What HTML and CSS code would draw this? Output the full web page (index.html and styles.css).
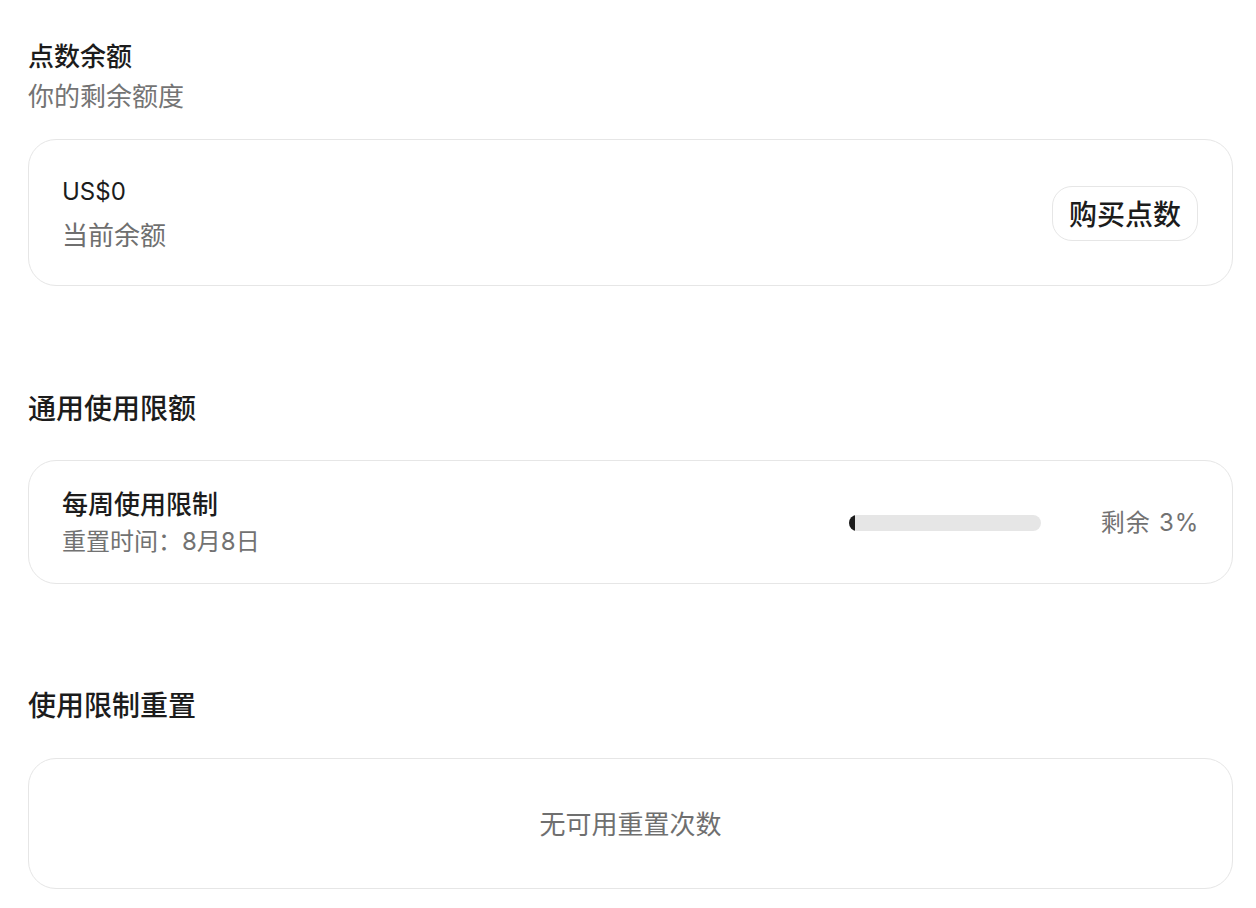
FILE: index.html
```html
<!DOCTYPE html>
<html lang="zh-CN">
<head>
<meta charset="utf-8">
<title>点数余额</title>
<link rel="stylesheet" href="styles.css">
</head>
<body>
<main class="page">
  <section class="section section-first">
    <h2 class="title-sm">点数余额</h2>
    <p class="subtitle">你的剩余额度</p>
    <div class="card card-balance">
      <div class="balance-info">
        <div class="amount">US$0</div>
        <div class="muted-label">当前余额</div>
      </div>
      <button class="btn">购买点数</button>
    </div>
  </section>

  <section class="section">
    <h2 class="title">通用使用限额</h2>
    <div class="card card-limit">
      <div class="limit-info">
        <div class="limit-name">每周使用限制</div>
        <div class="limit-reset">重置时间：8月8日</div>
      </div>
      <div class="limit-meter">
        <div class="bar"><div class="bar-fill" style="width:3%"></div></div>
        <div class="remain">剩余 3%</div>
      </div>
    </div>
  </section>

  <section class="section section-last">
    <h2 class="title">使用限制重置</h2>
    <div class="card card-empty">
      <div class="empty-text">无可用重置次数</div>
    </div>
  </section>
</main>
</body>
</html>
```

FILE: styles.css
```css
* { box-sizing: border-box; }

html, body {
  margin: 0;
  padding: 0;
  background: #ffffff;
}

body {
  font-family: "Inter", "Noto Sans CJK SC", sans-serif;
  color: #1c1c1c;
}

.page {
  padding: 38px 23px 20px 28px;
  display: flex;
  flex-direction: column;
}

.section {
  display: flex;
  flex-direction: column;
  margin-top: 103px;
}

.section-first { margin-top: 0; }
.section-last { margin-top: 102px; }

.title-sm {
  margin: 0;
  font-size: 26px;
  line-height: 38px;
  font-weight: 500;
  color: #1c1c1c;
}

.subtitle {
  margin: 1px 0 0;
  font-size: 26px;
  line-height: 40px;
  color: #747474;
}

.title {
  margin: 0;
  font-size: 28px;
  line-height: 40px;
  font-weight: 500;
  color: #1c1c1c;
}

.card {
  border: 1.5px solid #e6e6e6;
  border-radius: 28px;
  background: #fff;
}

.card-balance {
  margin-top: 22px;
  padding: 34px 33px 31px 33px;
  display: flex;
  align-items: center;
  justify-content: space-between;
}

.balance-info {
  display: flex;
  flex-direction: column;
  gap: 8px;
}

.amount {
  font-size: 24px;
  line-height: 36px;
  color: #1c1c1c;
}

.muted-label {
  font-size: 26px;
  line-height: 36px;
  color: #6f6f6f;
}

.btn {
  font-family: inherit;
  font-size: 28px;
  font-weight: 500;
  color: #1c1c1c;
  background: #fff;
  border: 1.5px solid #e6e6e6;
  border-radius: 20px;
  height: 55px;
  padding: 0 16px;
  margin: 0 1px 2px 0;
  cursor: pointer;
}

.card-limit {
  margin-top: 31px;
  padding: 26px 33px 24px;
  display: flex;
  align-items: center;
  justify-content: space-between;
}

.limit-info {
  display: flex;
  flex-direction: column;
  gap: 2px;
}

.limit-name {
  font-size: 26px;
  line-height: 36px;
  font-weight: 500;
  color: #1c1c1c;
}

.limit-reset {
  font-size: 24px;
  line-height: 34px;
  color: #727272;
}

.limit-meter {
  display: flex;
  align-items: center;
  gap: 60px;
}

.bar {
  width: 192px;
  height: 16px;
  border-radius: 8px;
  background: #e6e6e6;
  overflow: hidden;
}

.bar-fill {
  height: 100%;
  background: #1c1c1c;
}

.remain {
  font-size: 24px;
  line-height: 34px;
  color: #727272;
  word-spacing: 1px;
  letter-spacing: 0.8px;
}

.card-empty {
  margin-top: 32px;
  padding: 48px 20px 45px;
  display: flex;
  justify-content: center;
}

.empty-text {
  font-size: 26px;
  line-height: 36px;
  color: #6f6f6f;
}
```
